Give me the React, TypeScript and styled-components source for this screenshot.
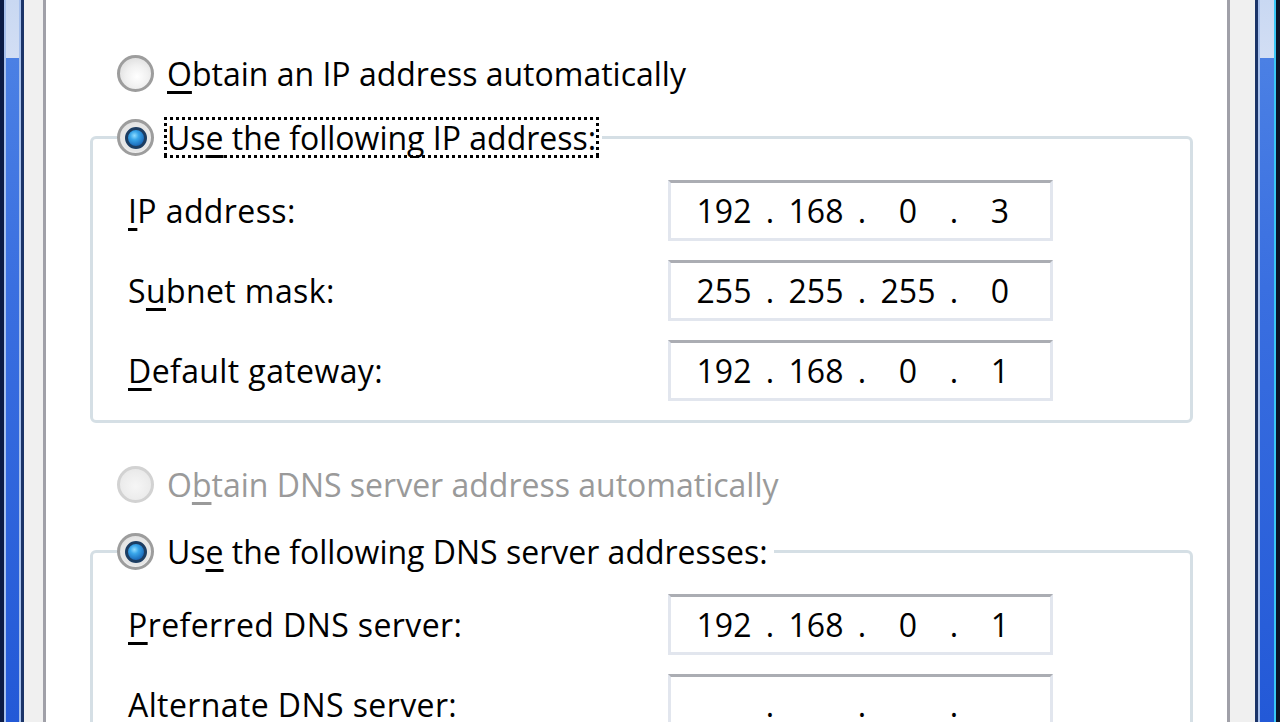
import React from "react";
import styled, { createGlobalStyle } from "styled-components";

const GlobalStyle = createGlobalStyle`
  html, body {
    margin: 0;
    padding: 0;
    height: 100%;
    overflow: hidden;
  }
  body {
    font-family: "Open Sans", "Noto Sans", "DejaVu Sans", sans-serif;
    color: #000;
  }
`;

type Octets = [string, string, string, string];

const ipRows: { label: string; key: number; value: Octets }[] = [
  { label: "IP address:", key: 0, value: ["192", "168", "0", "3"] },
  { label: "Subnet mask:", key: 1, value: ["255", "255", "255", "0"] },
  { label: "Default gateway:", key: 0, value: ["192", "168", "0", "1"] },
];

const dnsRows: { label: string; key: number; value: Octets }[] = [
  { label: "Preferred DNS server:", key: 0, value: ["192", "168", "0", "1"] },
  { label: "Alternate DNS server:", key: 0, value: ["", "", "", ""] },
];

// underline the access key letter like a Win32 dialog
function Mnemonic({ text, at }: { text: string; at: number }) {
  return (
    <>
      {text.slice(0, at)}
      <Key>{text[at]}</Key>
      {text.slice(at + 1)}
    </>
  );
}

function IpField({ value }: { value: Octets }) {
  return (
    <Field>
      {value.map((o, i) => (
        <React.Fragment key={i}>
          <Octet>{o}</Octet>
          {i < 3 && <Dot>.</Dot>}
        </React.Fragment>
      ))}
    </Field>
  );
}

function App() {
  return (
    <Screen>
      <GlobalStyle />
      <FrameEdge $side="left" />
      <Dialog>
        <TabPage>
          <OptionRow>
            <Radio />
            <OptionLabel>
              <Mnemonic text="Obtain an IP address automatically" at={0} />
            </OptionLabel>
          </OptionRow>

          <GroupBox>
            <Legend>
              <Radio $checked />
              <OptionLabel $focused>
                <Mnemonic text="Use the following IP address:" at={2} />
              </OptionLabel>
            </Legend>
            <FieldGrid>
              {ipRows.map((r) => (
                <React.Fragment key={r.label}>
                  <FieldLabel>
                    <Mnemonic text={r.label} at={r.key} />
                  </FieldLabel>
                  <IpField value={r.value} />
                </React.Fragment>
              ))}
            </FieldGrid>
          </GroupBox>

          <OptionRow $top={41} $disabled>
            <Radio $disabled />
            <OptionLabel>
              <Mnemonic text="Obtain DNS server address automatically" at={1} />
            </OptionLabel>
          </OptionRow>

          <GroupBox $top={27}>
            <Legend>
              <Radio $checked />
              <OptionLabel>
                <Mnemonic text="Use the following DNS server addresses:" at={2} />
              </OptionLabel>
            </Legend>
            <FieldGrid>
              {dnsRows.map((r) => (
                <React.Fragment key={r.label}>
                  <FieldLabel>
                    <Mnemonic text={r.label} at={r.key} />
                  </FieldLabel>
                  <IpField value={r.value} />
                </React.Fragment>
              ))}
            </FieldGrid>
          </GroupBox>
        </TabPage>
      </Dialog>
      <FrameEdge $side="right" />
    </Screen>
  );
}

export default App;

const Screen = styled.div`
  display: flex;
  height: 100vh;
  overflow: hidden;
  background: #fff;
`;

const FrameEdge = styled.div<{ $side: "left" | "right" }>`
  flex: none;
  width: ${(p) => (p.$side === "left" ? "24px" : "25px")};
  background: ${(p) =>
      p.$side === "left"
        ? "linear-gradient(90deg, #0b1b45 0 4px, #a7c0ec 4px 6px, transparent 6px 19px, #a7c0ec 19px 21px, #1b3469 21px 24px)"
        : "linear-gradient(90deg, #1b3469 0 3px, #a7c0ec 3px 5px, transparent 5px 19px, #39c6f5 19px 21px, #0b1428 21px 25px)"},
    linear-gradient(180deg, #c9d8f2 0, #d2def4 58px, #4b80e4 58px, #3a6fe0 40%, #2359d7 100%);
`;

const Dialog = styled.div`
  flex: 1;
  display: flex;
  background: #f0f0f0;
  padding: 0 25px 0 19px;
`;

const TabPage = styled.div`
  flex: 1;
  display: flex;
  flex-direction: column;
  background: #fff;
  border-left: 3px solid #a0a0a8;
  border-right: 3px solid #a0a0a8;
  padding: 53px 34px 0 44px;
`;

const OptionRow = styled.div<{ $top?: number; $disabled?: boolean }>`
  display: flex;
  align-items: center;
  height: 40px;
  padding-left: 27px;
  margin-top: ${(p) => p.$top ?? 0}px;
  color: ${(p) => (p.$disabled ? "#9a9a9a" : "#000")};
`;

const Radio = styled.span<{ $checked?: boolean; $disabled?: boolean }>`
  position: relative;
  flex: none;
  box-sizing: border-box;
  width: 37px;
  height: 37px;
  border-radius: 50%;
  border: 3px solid ${(p) => (p.$disabled ? "#d2d2d2" : "#9d9d9d")};
  background: ${(p) =>
    p.$disabled
      ? "radial-gradient(circle at 50% 55%, #f6f6f6 0, #ececec 60%, #e2e2e2 100%)"
      : "radial-gradient(circle at 55% 60%, #ffffff 0, #f0f0f0 45%, #d4d4d4 100%)"};

  &::after {
    content: "";
    display: ${(p) => (p.$checked ? "block" : "none")};
    position: absolute;
    left: 50%;
    top: 50%;
    width: 22px;
    height: 22px;
    box-sizing: border-box;
    transform: translate(-50%, -50%);
    border-radius: 50%;
    border: 3px solid #1c3d62;
    background: radial-gradient(circle at 40% 35%, #8fdcff 0, #39a6ea 30%, #1a68b8 75%, #134f8e 100%);
    box-shadow: 0 0 0 3px #e6e6e6;
  }
`;

const OptionLabel = styled.span<{ $focused?: boolean }>`
  margin-left: 10px;
  padding: 3px;
  font-size: 32px;
  line-height: 35px;
  white-space: nowrap;
  background: ${(p) =>
    p.$focused
      ? `repeating-linear-gradient(90deg, #000 0 3px, transparent 3px 6px) top left / 100% 3px no-repeat,
         repeating-linear-gradient(90deg, #000 0 3px, transparent 3px 6px) bottom left / 100% 3px no-repeat,
         repeating-linear-gradient(180deg, #000 0 3px, transparent 3px 6px) top left / 3px 100% no-repeat,
         repeating-linear-gradient(180deg, #000 0 3px, transparent 3px 6px) top right / 3px 100% no-repeat`
      : "none"};
`;

const Key = styled.span`
  text-decoration: underline;
  text-decoration-thickness: 3px;
  text-underline-offset: 5px;
`;

const GroupBox = styled.fieldset<{ $top?: number }>`
  margin: ${(p) => p.$top ?? 24}px 0 0 0;
  padding: 0;
  min-width: 0;
  border: 3px solid #d5dfe5;
  border-radius: 6px;
`;

const Legend = styled.legend`
  display: flex;
  align-items: center;
  height: 41px;
  margin-left: 24px;
  padding: 0 3px 0 0;
  background: #fff;
`;

const FieldGrid = styled.div`
  display: grid;
  grid-template-columns: 1fr 385px;
  align-items: center;
  row-gap: 19px;
  padding: 22px 137px 19px 35px;
`;

const FieldLabel = styled.span`
  font-size: 32px;
  letter-spacing: 0.4px;
  line-height: 35px;
  white-space: nowrap;
`;

const Field = styled.div`
  box-sizing: border-box;
  height: 61px;
  display: flex;
  align-items: center;
  padding-left: 13px;
  background: #fff;
  border: 3px solid #e2e6ee;
  border-top-color: #abadb3;
  font-size: 32px;
`;

const Octet = styled.span`
  width: 80px;
  text-align: center;
`;

const Dot = styled.span`
  width: 12px;
  text-align: center;
`;
